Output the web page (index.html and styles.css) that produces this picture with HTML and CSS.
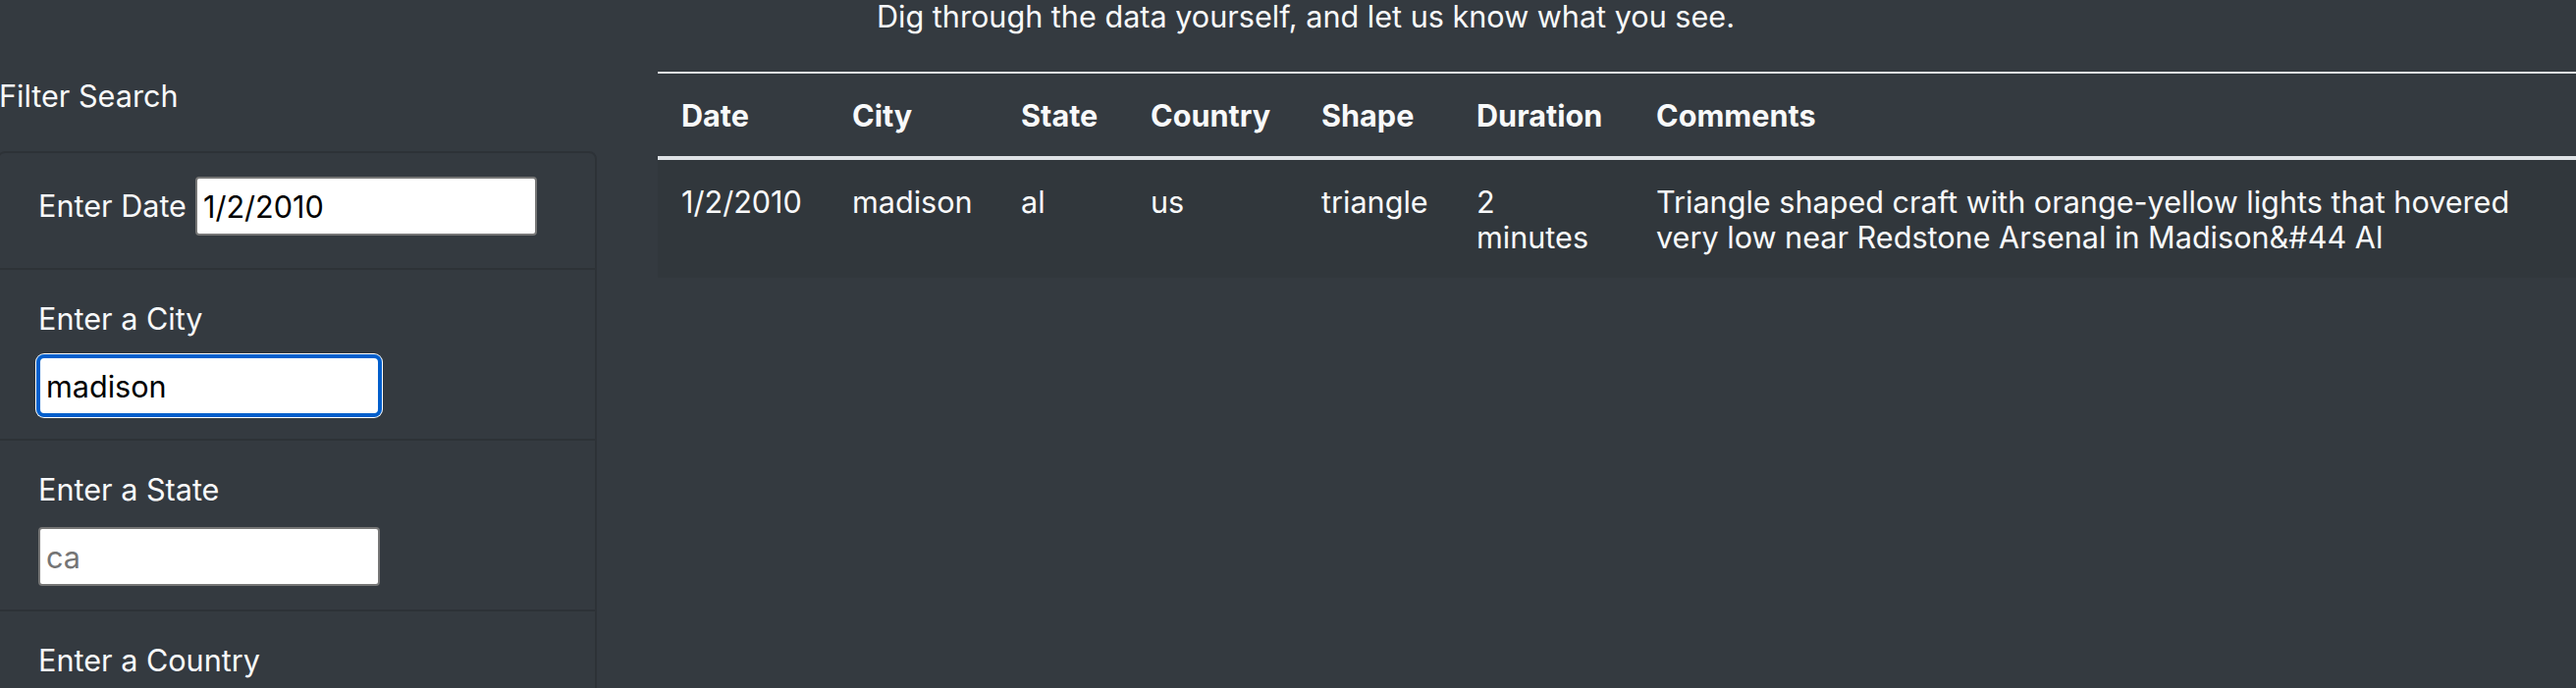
FILE: index.html
```html
<!DOCTYPE html>
<html lang="en">
<head>
<meta charset="utf-8">
<title>UFO Sightings</title>
<link rel="stylesheet" href="styles.css">
</head>
<body>
<div class="page">
  <p class="subtitle">Dig through the data yourself, and let us know what you see.</p>
  <div class="main">
    <aside class="sidebar">
      <div class="filter-title">Filter Search</div>
      <ul class="filters">
        <li class="filter filter-inline">
          <label class="filter-label" for="datetime">Enter Date</label>
          <input class="filter-input" id="datetime" type="text" value="1/2/2010">
        </li>
        <li class="filter">
          <label class="filter-label" for="city">Enter a City</label>
          <input class="filter-input is-focused" id="city" type="text" value="madison">
        </li>
        <li class="filter">
          <label class="filter-label" for="state">Enter a State</label>
          <input class="filter-input" id="state" type="text" placeholder="ca">
        </li>
        <li class="filter">
          <label class="filter-label" for="country">Enter a Country</label>
          <input class="filter-input" id="country" type="text" placeholder="us">
        </li>
        <li class="filter">
          <label class="filter-label" for="shape">Enter a Shape</label>
          <input class="filter-input" id="shape" type="text" placeholder="circle">
        </li>
      </ul>
    </aside>
    <section class="results">
      <table class="ufo-table">
        <colgroup>
          <col class="c-date"><col class="c-city"><col class="c-state"><col class="c-country"><col class="c-shape"><col class="c-duration"><col class="c-comments">
        </colgroup>
        <thead>
          <tr>
            <th>Date</th><th>City</th><th>State</th><th>Country</th><th>Shape</th><th>Duration</th><th>Comments</th>
          </tr>
        </thead>
        <tbody>
          <tr>
            <td>1/2/2010</td><td>madison</td><td>al</td><td>us</td><td>triangle</td><td>2 minutes</td>
            <td>Triangle shaped craft with orange-yellow lights that hovered very low near Redstone Arsenal in Madison&amp;#44 Al</td>
          </tr>
        </tbody>
      </table>
    </section>
  </div>
</div>
</body>
</html>
```
FILE: styles.css
```css
html, body {
  margin: 0;
  padding: 0;
  overflow: hidden;
  background: #343a40;
}
body {
  font-family: "Inter", "Noto Sans", sans-serif;
  font-size: 30.6px;
  line-height: 48px;
  color: #f8f9fa;
}
.page {
  width: 2624px;
  height: 701px;
  overflow: hidden;
}
.subtitle {
  margin: -7px 0 32px;
  padding-left: 36px;
  text-align: center;
}
.main {
  display: flex;
  align-items: flex-start;
}
.sidebar {
  width: 611px;
  margin-left: -3px;
  flex: none;
}
.filter-title {
  margin: 1px 0 32px;
  padding-left: 2px;
}
.filters {
  list-style: none;
  margin: 0;
  padding: 0;
  border: 2px solid #2d3237;
  border-radius: 8px;
}
.filter {
  padding: 24px 40px;
  border-top: 2px solid #2d3237;
}
.filter:first-child {
  border-top: 0;
}
.filter-inline {
  display: flex;
  align-items: center;
  gap: 9px;
  padding-bottom: 33px;
}
.filter-label {
  display: block;
  padding-top: 2px;
  margin-bottom: 14px;
}
.filter-inline .filter-label {
  padding-top: 0;
  margin-bottom: 0;
}
.filter-input {
  display: block;
  box-sizing: border-box;
  width: 348px;
  height: 60px;
  margin: 0;
  padding: 0 6px;
  border: 2px solid #767676;
  border-radius: 4px;
  background: #fff;
  color: #000;
  font-family: inherit;
  font-size: 30.6px;
  outline: none;
}
.filter-input::placeholder {
  color: #757575;
}
.filter-input.is-focused {
  border-color: #005fcc;
  border-radius: 6px;
  box-shadow: 0 0 0 2px #005fcc, 0 0 0 3px #fff;
}
.results {
  flex: 1;
  margin-left: 62px;
}
.ufo-table {
  width: 100%;
  table-layout: fixed;
  border-collapse: separate;
  border-spacing: 0;
  color: #f8f9fa;
}
.c-date { width: 174px; }
.c-city { width: 172px; }
.c-state { width: 132px; }
.c-country { width: 174px; }
.c-shape { width: 158px; }
.c-duration { width: 183px; }
.ufo-table th,
.ufo-table td {
  padding: 25px 24px 23px;
  line-height: 36px;
  text-align: left;
  vertical-align: top;
}
.ufo-table th {
  font-weight: 700;
  border-top: 2px solid #dee2e6;
  border-bottom: 4px solid #dee2e6;
}
.ufo-table tbody tr:nth-of-type(odd) {
  background: rgba(0, 0, 0, 0.05);
}
```
